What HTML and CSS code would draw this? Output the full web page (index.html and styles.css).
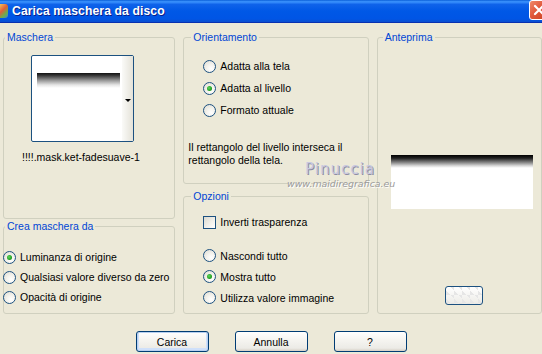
FILE: index.html
```html
<!DOCTYPE html>
<html lang="it">
<head>
    <meta charset="UTF-8">
    <title>Carica maschera da disco</title>
    <link rel="stylesheet" href="styles.css">
</head>
<body>

    <div class="window">
        <div class="titlebar">
            <span class="app-icon"></span>
            <span class="title">Carica maschera da disco</span>
            <span class="close">
                <svg width="14" height="14" viewBox="0 0 14 14">
                    <path d="M3 3 L11 11 M11 3 L3 11" stroke="#fff" stroke-width="2.2" stroke-linecap="round"/>
                </svg>
            </span>
        </div>

        <div class="content">
            <div class="main">
                <div class="col col-left">
                    <div class="group group-mask">
                        <div class="legend legend-mask">Maschera</div>
                        <div class="thumb">
                            <div class="thumb-img"><div class="fade-bar"></div></div>
                            <div class="thumb-drop"><span class="arrow"></span></div>
                        </div>
                        <div class="mask-name">!!!!.mask.ket-fadesuave-1</div>
                    </div>

                    <div class="group group-source">
                        <div class="legend legend-source">Crea maschera da</div>
                        <div class="opts opts-source">
                            <div class="opt"><span class="radio checked"></span>Luminanza di origine</div>
                            <div class="opt"><span class="radio"></span>Qualsiasi valore diverso da zero</div>
                            <div class="opt"><span class="radio"></span>Opacità di origine</div>
                        </div>
                    </div>
                </div>

                <div class="col col-mid">
                    <div class="group group-orient">
                        <div class="legend legend-mid">Orientamento</div>
                        <div class="opts opts-orient">
                            <div class="opt"><span class="radio"></span>Adatta alla tela</div>
                            <div class="opt"><span class="radio checked"></span>Adatta al livello</div>
                            <div class="opt"><span class="radio"></span>Formato attuale</div>
                        </div>
                        <p class="note">Il rettangolo del livello interseca il<br>rettangolo della tela.</p>
                    </div>

                    <div class="group group-options">
                        <div class="legend legend-mid">Opzioni</div>
                        <div class="opts opts-options">
                            <div class="opt opt-check"><span class="checkbox"></span>Inverti trasparenza</div>
                            <div class="radios">
                                <div class="opt"><span class="radio"></span>Nascondi tutto</div>
                                <div class="opt"><span class="radio checked"></span>Mostra tutto</div>
                                <div class="opt"><span class="radio"></span>Utilizza valore immagine</div>
                            </div>
                        </div>
                    </div>
                </div>

                <div class="col col-right">
                    <div class="group group-preview">
                        <div class="legend legend-preview">Anteprima</div>
                        <div class="preview"></div>
                        <div class="zoom-btn"></div>
                    </div>
                </div>
            </div>

            <div class="buttons">
                <button class="btn btn-default">Carica</button>
                <button class="btn">Annulla</button>
                <button class="btn">?</button>
            </div>

            <div class="watermark">
                <div class="wm-name">Pinuccia</div>
                <div class="wm-site">www.maidiregrafica.eu</div>
            </div>
        </div>
    </div>

</body>
</html>
```

FILE: styles.css
```css
body {
    margin: 0;
    padding: 0;
    background-color: #ece9d8;
    font-family: "Liberation Sans", Arial, sans-serif;
    font-size: 10.5px;
    color: #000;
}

.window {
    width: 542px;
    height: 354px;
    overflow: hidden;
    background-color: #ece9d8;
}

/* barra del titolo stile XP */
.titlebar {
    height: 22px;
    border-bottom: 1px solid #0831b0;
    display: flex;
    align-items: center;
    background: linear-gradient(to bottom, #0a5fd8 0%, #3d95ff 8%, #0f63ea 20%, #0058e6 50%, #0055e5 85%, #0a4fd0 100%);
    position: relative;
}

.app-icon {
    width: 8px;
    height: 14px;
    background: linear-gradient(135deg, #f3c15a 0%, #e0603a 40%, #6ab04c 70%, #4a7fd8 100%);
    border-radius: 0 3px 3px 0;
}

.title {
    margin-left: 4px;
    color: #fff;
    font-weight: bold;
    font-size: 12.2px;
    letter-spacing: 0.1px;
    text-shadow: 1px 1px 0 #0a1f8a;
}

.close {
    position: absolute;
    left: 529px;
    top: 0;
    width: 21px;
    height: 20px;
    border: 1px solid #fff;
    border-radius: 3px;
    background: linear-gradient(135deg, #f08a6a 0%, #e0583a 45%, #c8401e 100%);
    display: flex;
    align-items: center;
    padding-left: 2px;
    box-sizing: border-box;
}

.content {
    position: relative;
    padding: 14px 0 0 3px;
}

.main {
    display: flex;
    gap: 8px;
}

.col {
    display: flex;
    flex-direction: column;
}

.col-left {
    width: 173px;
    gap: 7px;
}

.col-mid {
    width: 186px;
    gap: 12px;
}

.col-right {
    width: 166px;
}

.group {
    border: 1px solid #d0d0bf;
    border-radius: 3px;
    box-sizing: border-box;
}

.legend {
    width: fit-content;
    margin-top: -7px;
    padding: 0 2px;
    line-height: 13px;
    color: #0046d5;
    background-color: #ece9d8;
}

.legend-mask,
.legend-source {
    margin-left: 1px;
}

.legend-mid {
    margin-left: 7px;
}

.legend-preview {
    margin-left: 5px;
}

.group-mask {
    height: 182px;
}

.group-source {
    height: 88px;
}

.group-orient {
    height: 147px;
}

.group-options {
    height: 118px;
}

.group-preview {
    height: 277px;
}

/* miniatura della maschera */
.thumb {
    width: 103px;
    height: 87px;
    margin: 11px 0 0 27px;
    border: 1px solid #1c5180;
    border-radius: 2px;
    box-sizing: border-box;
    display: flex;
    background-color: #fff;
}

.thumb-img {
    flex: 1;
    padding: 17px 0 0 5px;
}

.fade-bar {
    width: 83px;
    height: 15px;
    background: linear-gradient(to bottom, #111 0%, #333 15%, #999 50%, #e6e6e6 80%, #fff 100%);
}

.thumb-drop {
    width: 11px;
    display: flex;
    align-items: center;
    justify-content: center;
    background: linear-gradient(to right, #fafaf8, #e4e2d8);
}

.arrow {
    width: 0;
    height: 0;
    border-left: 3px solid transparent;
    border-right: 3px solid transparent;
    border-top: 3px solid #000;
    margin-top: 3px;
}

.mask-name {
    margin-top: 9px;
    padding-left: 18px;
    line-height: 13px;
}

/* opzioni radio e checkbox */
.opt {
    display: flex;
    align-items: center;
    gap: 4px;
    white-space: nowrap;
}

.radio {
    width: 13px;
    height: 13px;
    border: 1px solid #1c5180;
    border-radius: 50%;
    box-sizing: border-box;
    background: radial-gradient(circle at 65% 70%, #fff 0%, #f4f3ee 40%, #dcdad0 100%);
    display: flex;
    align-items: center;
    justify-content: center;
    flex-shrink: 0;
}

.radio.checked::after {
    content: "";
    width: 5px;
    height: 5px;
    border-radius: 50%;
    background: radial-gradient(circle at 40% 40%, #5fd55f 0%, #21a121 60%, #158015 100%);
}

.checkbox {
    width: 13px;
    height: 13px;
    border: 1px solid #1c5180;
    box-sizing: border-box;
    background: linear-gradient(135deg, #dcdad0 0%, #f2f1ec 60%, #fff 100%);
    flex-shrink: 0;
}

.opts-source {
    padding-top: 14px;
}

.opts-source .opt {
    height: 20px;
    margin-left: -1px;
}

.opts-orient {
    padding: 11px 0 0 19px;
}

.opts-orient .opt {
    height: 22px;
}

.note {
    margin: 20px 0 0 4px;
    line-height: 13px;
}

.opts-options {
    padding: 8px 0 0 19px;
}

.opt-check {
    height: 22px;
}

.radios {
    margin-top: 12px;
}

.radios .opt {
    height: 21px;
}

/* anteprima */
.preview {
    width: 142px;
    height: 54px;
    margin: 111px 0 0 13px;
    background: linear-gradient(to bottom, #000 0%, #222 6%, #888 14%, #d8d8d8 20%, #fff 24%, #fff 100%);
}

.zoom-btn {
    width: 38px;
    height: 19px;
    margin: 77px 0 0 67px;
    border: 1px solid #1c5180;
    border-radius: 3px;
    box-sizing: border-box;
    background:
        linear-gradient(45deg, #e6e6e6 25%, transparent 25%, transparent 75%, #e6e6e6 75%) 0 0 / 8px 8px,
        linear-gradient(to bottom, #ffffff, #ecebe6);
}

/* pulsanti in basso */
.buttons {
    display: flex;
    justify-content: center;
    gap: 26px;
    margin-top: 17px;
    padding-right: 3px;
}

.btn {
    width: 73px;
    height: 21px;
    padding: 0;
    font-family: "Liberation Sans", Arial, sans-serif;
    font-size: 10.5px;
    color: #000;
    border: 1px solid #003c74;
    border-radius: 3px;
    background: linear-gradient(to bottom, #ffffff 0%, #f6f5f1 40%, #ecebe6 85%, #d6d0c5 100%);
}

.btn-default {
    box-shadow: inset 0 0 0 1px #b8d0f0, inset 0 -1px 0 2px #cfe0fa;
}

/* filigrana */
.watermark {
    position: absolute;
    left: 287px;
    top: 137px;
    width: 106px;
    text-align: center;
}

.wm-name {
    font-family: "DejaVu Sans", sans-serif;
    font-size: 15px;
    line-height: 18px;
    letter-spacing: 1px;
    color: #c8c8e0;
    text-shadow: 1px 1px 0 #8c8ca4;
}

.wm-site {
    font-family: "DejaVu Sans", sans-serif;
    font-style: italic;
    font-size: 9.4px;
    line-height: 11px;
    color: #9a9a9a;
    text-shadow: 1px 1px 0 #fff;
}
```
